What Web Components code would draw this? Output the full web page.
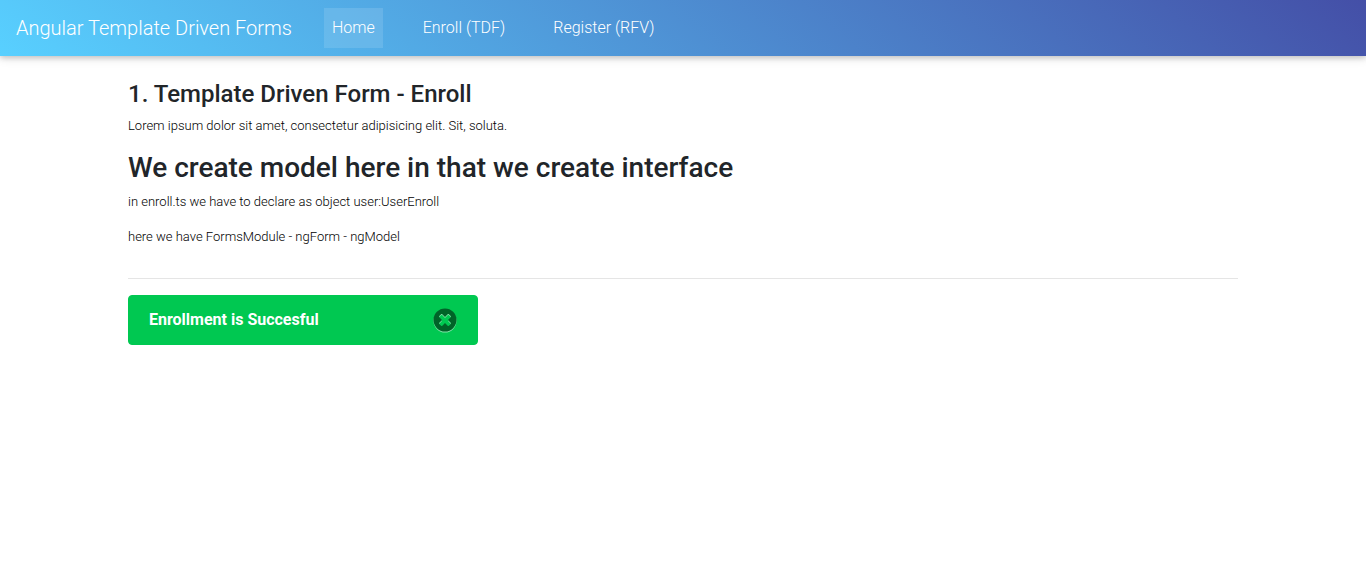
<!DOCTYPE html>
<html lang="en">
<head>
<meta charset="utf-8">
<meta name="viewport" content="width=device-width, initial-scale=1">
<title>Angular Template Driven Forms</title>
<style>
  body { margin: 0; background: #fff; color: #212529; font-family: Roboto, sans-serif; font-weight: 300; font-size: 16px; line-height: 24px; }
</style>
</head>
<body>
<app-root></app-root>
<script>
const define = (name, html, setup) => {
  const template = document.createElement('template');
  template.innerHTML = html;
  customElements.define(name, class extends HTMLElement {
    constructor() {
      super();
      this.attachShadow({ mode: 'open' }).append(template.content.cloneNode(true));
    }
    connectedCallback() { if (setup) setup(this); }
  });
};

define('nav-item', `
  <style>
    :host { display: block; }
    a { display: block; padding: 8px; color: #fff; text-decoration: none; }
    :host([active]) a { background: rgba(255, 255, 255, .12); }
  </style>
  <a href="#"><slot></slot></a>`);

define('nav-bar', `
  <style>
    :host { display: block; position: relative; }
    nav { display: flex; align-items: center; gap: 32px; padding: 8px 16px;
      background: linear-gradient(40deg, #58d0ff, #444fa7);
      box-shadow: 0 2px 5px rgba(0, 0, 0, .16), 0 2px 10px rgba(0, 0, 0, .12); }
    .brand { color: #fff; font-size: 20px; line-height: 32px; text-decoration: none; white-space: nowrap; }
    .links { display: flex; flex-wrap: wrap; gap: 32px; }
  </style>
  <nav>
    <a class="brand" href="#"><slot name="brand"></slot></a>
    <div class="links"><slot></slot></div>
  </nav>`);

define('page-intro', `
  <style>
    :host { display: block; padding-bottom: 32px; border-bottom: 1px solid #e5e5e5; margin-bottom: 16px; }
    h1, h2 { margin: 0 0 8px; font-weight: 500; }
    h1 { font-size: 24px; line-height: 28px; }
    h2 { font-size: 28px; line-height: 33px; }
    p { margin: 0 0 16px; font-size: 13px; line-height: 19px; color: #000; }
    p:last-child { margin: 0; }
  </style>
  <h1>1. Template Driven Form - Enroll</h1>
  <p>Lorem ipsum dolor sit amet, consectetur adipisicing elit. Sit, soluta.</p>
  <h2>We create model here in that we create interface</h2>
  <p>in enroll.ts we have to declare as object user:UserEnroll</p>
  <p>here we have FormsModule - ngForm - ngModel</p>`);

define('success-alert', `
  <style>
    :host { display: flex; align-items: center; justify-content: space-between; box-sizing: border-box;
      max-width: 350px; padding: 12px 20px; border: 1px solid #00c851; border-radius: 4px;
      background: #00c851; color: #fff; font-weight: 700; }
    button { display: flex; padding: 0; border: 0; background: none; cursor: pointer; }
    svg { display: block; overflow: visible; }
  </style>
  <span role="status"><slot></slot></span>
  <button type="button" aria-label="Close">
    <svg width="24" height="24" viewBox="0 0 24 24" aria-hidden="true">
      <defs>
        <path id="disc" fill-rule="evenodd" d="M12 .5a11.5 11.5 0 1 0 0 23 11.5 11.5 0 0 0 0-23ZM15 12l2.700 2.700c.4.4.4.8 0 1.200l-1.800 1.800c-.4.4-.8.4-1.200 0L12 15l-2.700 2.700c-.4.4-.8.4-1.200 0l-1.800-1.800c-.4-.4-.4-.8 0-1.200L9 12 6.300 9.300c-.4-.4-.4-.8 0-1.200l1.800-1.800c.4-.4.8-.4 1.200 0L12 9l2.700-2.700c.4-.4.8-.4 1.200 0l1.800 1.800c.4.4.4.8 0 1.200Z"/>
      </defs>
      <g opacity=".5">
        <use href="#disc" y="1" fill="#fff"/>
        <use href="#disc" fill="#000"/>
      </g>
    </svg>
  </button>`, host => {
    host.shadowRoot.querySelector('button').onclick = () => host.remove();
  });

define('app-root', `
  <style>
    :host { display: block; }
    main { box-sizing: border-box; max-width: 1140px; margin: 0 auto; padding: 24px 15px; }
  </style>
  <nav-bar>
    <span slot="brand">Angular Template Driven Forms</span>
    <nav-item active>Home</nav-item>
    <nav-item>Enroll (TDF)</nav-item>
    <nav-item>Register (RFV)</nav-item>
  </nav-bar>
  <main>
    <page-intro></page-intro>
    <success-alert>Enrollment is Succesful</success-alert>
  </main>`);
</script>
</body>
</html>
